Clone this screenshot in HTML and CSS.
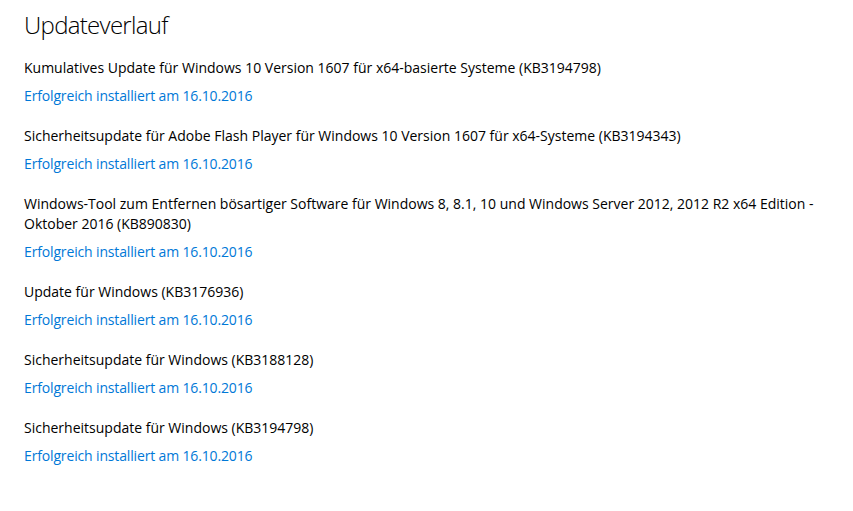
FILE: index.html
```html
<!DOCTYPE html>
<html lang="de">
<head>
    <meta charset="UTF-8">
    <meta name="viewport" content="width=device-width, initial-scale=1.0">
    <title>Updateverlauf</title>
    <link rel="stylesheet" href="styles.css">
</head>
<body>
    <div class="page">
        <h1>Updateverlauf</h1>

        <div class="update">
            <div class="name">Kumulatives Update für Windows 10 Version 1607 für x64-basierte Systeme (KB3194798)</div>
            <a class="status" href="#">Erfolgreich installiert am 16.10.2016</a>
        </div>

        <div class="update">
            <div class="name">Sicherheitsupdate für Adobe Flash Player für Windows 10 Version 1607 für x64-Systeme (KB3194343)</div>
            <a class="status" href="#">Erfolgreich installiert am 16.10.2016</a>
        </div>

        <div class="update">
            <div class="name">Windows-Tool zum Entfernen bösartiger Software für Windows 8, 8.1, 10 und Windows Server 2012, 2012 R2 x64 Edition - Oktober 2016 (KB890830)</div>
            <a class="status" href="#">Erfolgreich installiert am 16.10.2016</a>
        </div>

        <div class="update">
            <div class="name">Update für Windows (KB3176936)</div>
            <a class="status" href="#">Erfolgreich installiert am 16.10.2016</a>
        </div>

        <div class="update">
            <div class="name">Sicherheitsupdate für Windows (KB3188128)</div>
            <a class="status" href="#">Erfolgreich installiert am 16.10.2016</a>
        </div>

        <div class="update">
            <div class="name">Sicherheitsupdate für Windows (KB3194798)</div>
            <a class="status" href="#">Erfolgreich installiert am 16.10.2016</a>
        </div>
    </div>
</body>
</html>
```

FILE: styles.css
```css
body {
    margin: 0;
    background: #fff;
    color: #000;
    font-family: "Open Sans", "Noto Sans", Arial, sans-serif;
}
.page {
    padding: 5px 24px 20px 24px;
}
h1 {
    font-weight: 300;
    font-size: 24px;
    letter-spacing: -0.7px;
    margin: 0 0 13px 0;
    line-height: 40px;
}
.update {
    display: flex;
    flex-direction: column;
    align-items: flex-start;
    margin-bottom: 20px;
}
.name {
    font-size: 14px;
    line-height: 20px;
}
.status {
    font-size: 14px;
    line-height: 20px;
    letter-spacing: -0.15px;
    margin-top: 8px;
    color: #0078d7;
    text-decoration: none;
}
```
